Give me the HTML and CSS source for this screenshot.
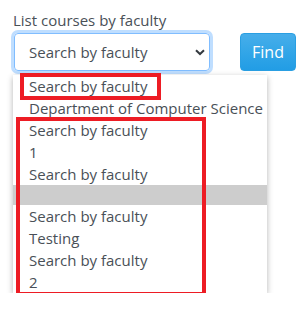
FILE: index.html
```html
<!DOCTYPE html>
<html lang="en">
<head>
    <meta charset="UTF-8">
    <meta name="viewport" content="width=device-width, initial-scale=1.0">
    <title>Courses by faculty</title>
    <link rel="stylesheet" href="styles.css">
</head>
<body>
    <div class="search">
        <label class="search-label">List courses by faculty</label>
        <div class="search-row">
            <div class="picker">
                <div class="picker-box">
                    <span>Search by faculty</span>
                    <svg class="chevron" width="10" height="7" viewBox="0 0 10 7"><path d="M1 1.2 L5 5 L9 1.2" fill="none" stroke="#343a40" stroke-width="2"/></svg>
                </div>
                <!-- open listbox of the select -->
                <div class="popup">
                    <ul class="listbox">
                        <li>Search by faculty</li>
                        <li>Department of Computer Science</li>
                        <li>Search by faculty</li>
                        <li>1</li>
                        <li>Search by faculty</li>
                        <li class="empty"></li>
                        <li>Search by faculty</li>
                        <li>Testing</li>
                        <li>Search by faculty</li>
                        <li>2</li>
                    </ul>
                    <!-- red annotation boxes -->
                    <div class="mark mark-first"></div>
                    <div class="mark mark-rest"></div>
                </div>
            </div>
            <button class="find-btn">Find</button>
        </div>
    </div>
</body>
</html>
```

FILE: styles.css
```css
body {
    margin: 0;
    background: #fff;
    font-family: "Open Sans", "Noto Sans", sans-serif;
    color: #495057;
}
.search {
    padding: 10px 10px 0 14px;
}
.search-label {
    display: block;
    margin-left: -1px;
    font-size: 15px;
    line-height: 21px;
    margin-bottom: 2px;
}
.search-row {
    display: flex;
    align-items: flex-start;
    gap: 30px;
}
.picker {
    width: 196px;
    flex-shrink: 0;
}
.picker-box {
    box-sizing: border-box;
    height: 38px;
    display: flex;
    align-items: center;
    justify-content: space-between;
    padding: 0 4px 0 14px;
    border: 1px solid #80bdff;
    border-radius: 4px;
    box-shadow: 0 0 0 3px rgba(0, 123, 255, .25);
    font-size: 15px;
}
.chevron {
    margin-top: 1px;
}
.popup {
    position: relative;
    width: 254px;
    margin: 4px 0 0 -1px;
}
.listbox {
    margin: 0;
    padding: 0;
    list-style: none;
    background: #fff;
    box-shadow: 0 2px 6px rgba(0, 0, 0, .3);
    font-size: 15px;
}
.listbox li {
    height: 22px;
    line-height: 22px;
    padding-left: 16px;
    white-space: nowrap;
}
.listbox li.empty {
    height: 20px;
    background: #cdcdcd;
}
.mark {
    position: absolute;
    border: 4px solid #ed1c24;
    box-sizing: border-box;
}
.mark-first {
    left: 7px;
    top: -2px;
    width: 141px;
    height: 27px;
}
.mark-rest {
    left: 3px;
    top: 42px;
    width: 190px;
    height: 179px;
}
.find-btn {
    width: 56px;
    height: 38px;
    border: 1px solid #2a9fe2;
    border-radius: 4px;
    background: linear-gradient(#47aeea, #2fa4e7 60%, #229de5);
    color: #fff;
    font-family: "Open Sans", "Noto Sans", sans-serif;
    font-size: 16px;
    padding: 0;
}
```
